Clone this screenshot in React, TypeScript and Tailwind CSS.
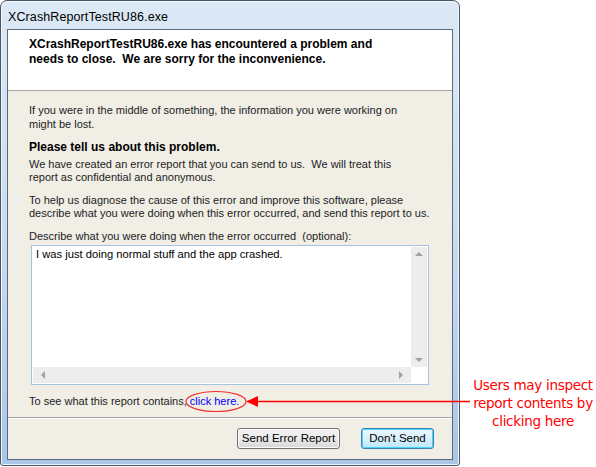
import React from 'react';

const ScrollArrow = ({ dir }: { dir: 'up' | 'down' | 'left' | 'right' }) => {
  const pts = {
    up: '0,4 4,0 8,4',
    down: '0,0 8,0 4,4',
    left: '4,0 4,8 0,4',
    right: '0,0 0,8 4,4',
  }[dir];
  const vert = dir === 'up' || dir === 'down';
  return (
    <svg width={vert ? 8 : 4} height={vert ? 4 : 8} viewBox={vert ? '0 0 8 4' : '0 0 4 8'}>
      <polygon points={pts} fill="#a0a0a0" />
    </svg>
  );
};

const App: React.FC = () => {
  return (
    <div className="relative w-[596px] h-[467px] bg-white flex items-start font-['Liberation_Sans',Arial,sans-serif] text-[#1e1e1e]">
      {/* window */}
      <div className="w-[460px] h-[466px] shrink-0 flex flex-col rounded-t-[7px] rounded-b-[3px] border border-[#4a5564] bg-gradient-to-b from-[#dce9f6] via-[#c9dcf0] to-[#aac6e6] shadow-[inset_0_0_0_1px_#f0f6fc]">
        <div className="h-[28px] shrink-0 pl-[7px] pt-[5px] flex items-center text-[12.5px] text-black tracking-[0.1px]">
          XCrashReportTestRU86.exe
        </div>

        <div className="flex-1 min-h-0 mx-[6px] mb-[5px] border border-[#5a6a7e] bg-[#f0eee5] flex flex-col text-[11px] leading-[13.5px] text-[#1c1c24] whitespace-nowrap">
          {/* header */}
          <div className="h-[61px] shrink-0 bg-white border-b border-[#a3a3a3] pl-[21px] pt-[7px] font-bold text-[12px] leading-[15px] text-black">
            <div>XCrashReportTestRU86.exe has encountered a problem and</div>
            <div>needs to close.&nbsp; We are sorry for the inconvenience.</div>
          </div>

          <div className="flex-1 flex flex-col pl-[21px] pt-[13px]">
            <p>
              If you were in the middle of something, the information you were working on
              <br />
              might be lost.
            </p>
            <p className="mt-[10px] font-bold text-[12px] text-black">Please tell us about this problem.</p>
            <p className="mt-[3px]">
              We have created an error report that you can send to us.&nbsp; We will treat this
              <br />
              report as confidential and anonymous.
            </p>
            <p className="mt-[9px]">
              To help us diagnose the cause of this error and improve this software, please
              <br />
              describe what you were doing when this error occurred, and send this report to us.
            </p>
            <p className="mt-[9px]">Describe what you were doing when the error occurred&nbsp; (optional):</p>

            {/* text box */}
            <div className="mt-[2px] ml-[2px] w-[398px] h-[140px] border border-[#a6c3df] bg-white flex flex-col">
              <div className="flex-1 flex">
                <div className="flex-1 pl-[4px] pt-[2px] text-black text-[11.2px]">
                  I was just doing normal stuff and the app crashed.
                </div>
                <div className="w-[16px] mr-[1px] mt-[1px] bg-[#ededed] flex flex-col items-center justify-between py-[5px]">
                  <ScrollArrow dir="up" />
                  <ScrollArrow dir="down" />
                </div>
              </div>
              <div className="h-[17px] flex">
                <div className="flex-1 ml-[1px] mb-[1px] bg-[#ededed] flex items-center justify-between px-[8px]">
                  <ScrollArrow dir="left" />
                  <ScrollArrow dir="right" />
                </div>
                <div className="w-[17px]" />
              </div>
            </div>

            <p className="mt-[10px]">
              To see what this report contains, <span className="text-[#0000ff]">click here.</span>
            </p>
          </div>

          {/* footer */}
          <div className="h-[42px] shrink-0 border-t border-[#a3a3a3] shadow-[inset_0_1px_0_#ffffff] flex justify-end items-start pt-[10px] pr-[18px] gap-[21px]">
            <button className="w-[103px] h-[21px] rounded-[3px] border border-[#707070] bg-gradient-to-b from-[#f2f2f2] via-[#ebebeb] to-[#d6d6d6] shadow-[inset_0_0_0_1px_#fcfcfc] text-[11.5px] text-black">
              Send Error Report
            </button>
            <button className="w-[73px] h-[21px] rounded-[3px] border border-[#3c7fb1] bg-gradient-to-b from-[#eaf6fd] via-[#d9f0fc] to-[#bee6fd] shadow-[inset_0_0_0_1px_#48d7fb] text-[11.5px] text-black">
              Don't Send
            </button>
          </div>
        </div>
      </div>

      {/* annotation */}
      <div className="flex-1 pt-[376px] pl-[10px] text-center text-[13.5px] leading-[18px] text-[#ff0000] font-['DejaVu_Sans',sans-serif] tracking-[-0.3px]">
        <div>Users may inspect</div>
        <div>report contents by</div>
        <div>clicking here</div>
      </div>

      {/* callout arrow */}
      <svg className="absolute left-0 top-0 pointer-events-none" width="596" height="467">
        <ellipse cx="216" cy="401.5" rx="30" ry="10" fill="none" stroke="#f03030" strokeWidth="1.2" />
        <line x1="256" y1="401.5" x2="470" y2="401.5" stroke="#ff0000" strokeWidth="1.3" />
        <polygon points="246,401.5 258,396 258,407" fill="#ff0000" />
      </svg>
    </div>
  );
};

export default App;
